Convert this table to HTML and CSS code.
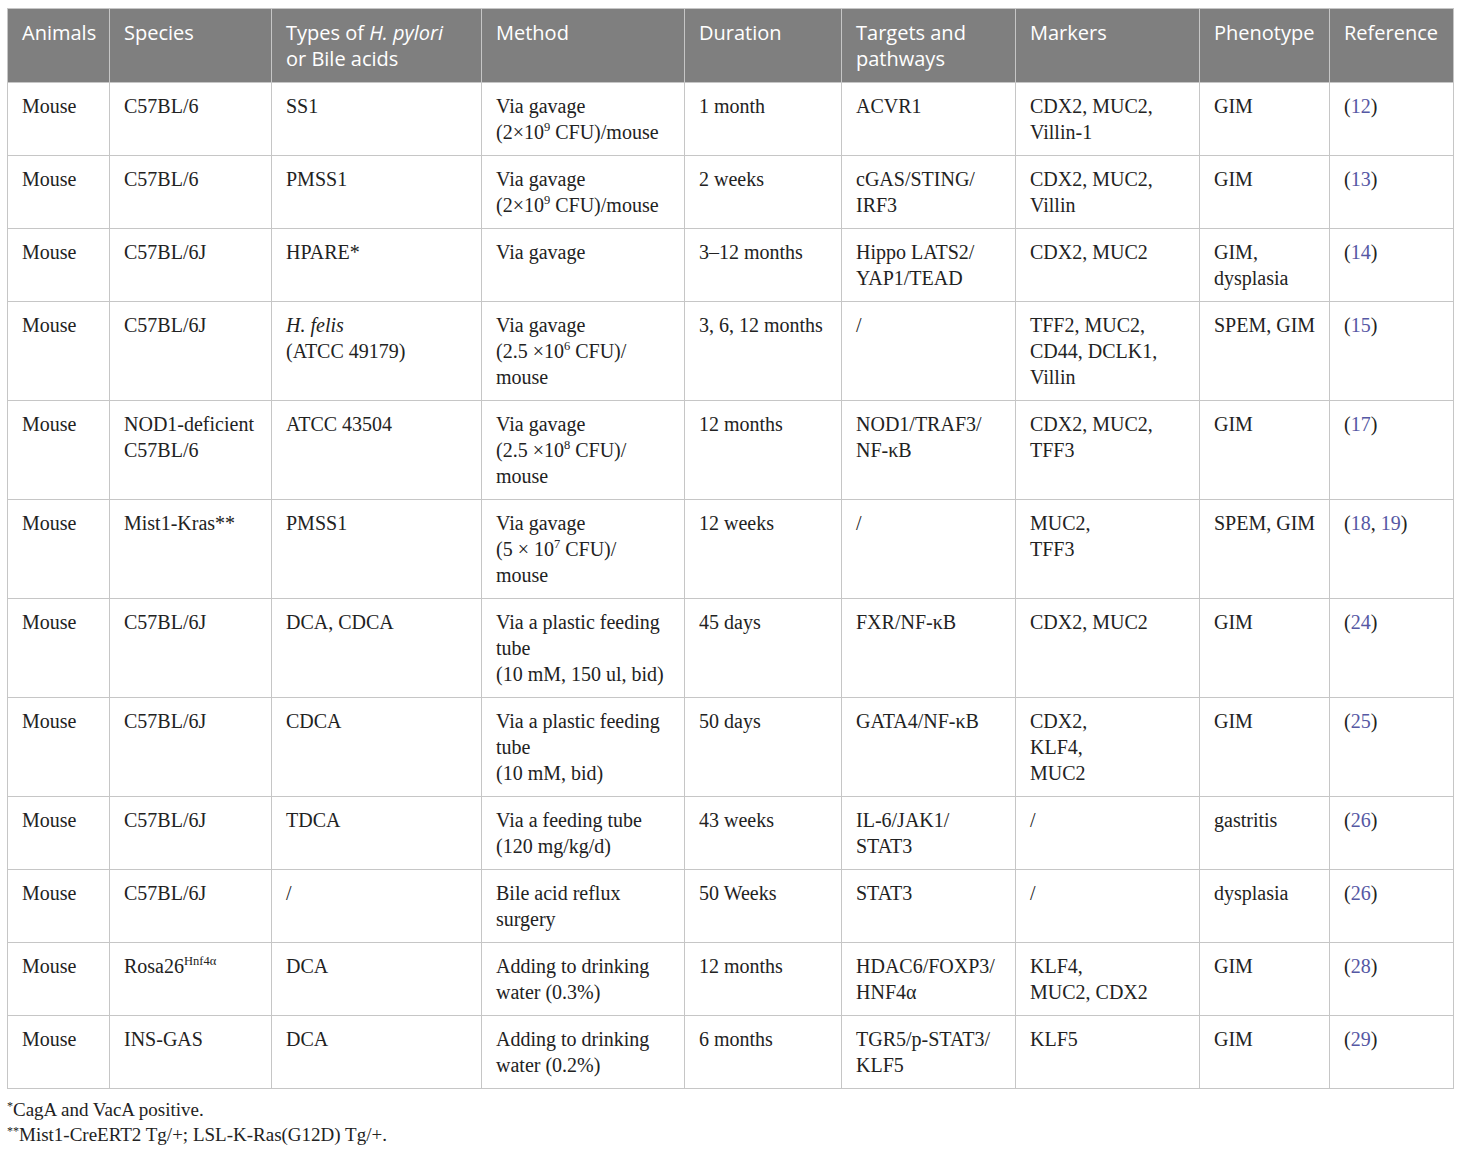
FILE: index.html
```html
<!DOCTYPE html>
<html>
<head>
<meta charset="utf-8">
<link rel="stylesheet" href="styles.css">
</head>
<body>
<div class="wrap">
<table class="data">
<colgroup>
<col class="c1"><col class="c2"><col class="c3"><col class="c4"><col class="c5"><col class="c6"><col class="c7"><col class="c8"><col class="c9">
</colgroup>
<thead>
<tr>
<th>Animals</th><th>Species</th><th>Types of <i>H. pylori</i><br>or Bile acids</th><th>Method</th><th>Duration</th><th>Targets and pathways</th><th>Markers</th><th>Phenotype</th><th>Reference</th>
</tr>
</thead>
<tbody>
<tr><td>Mouse</td><td>C57BL/6</td><td>SS1</td><td>Via gavage<br>(2×10<sup>9</sup> CFU)/mouse</td><td>1 month</td><td>ACVR1</td><td>CDX2, MUC2, Villin-1</td><td>GIM</td><td>(<a class="ref">12</a>)</td></tr>
<tr><td>Mouse</td><td>C57BL/6</td><td>PMSS1</td><td>Via gavage<br>(2×10<sup>9</sup> CFU)/mouse</td><td>2 weeks</td><td>cGAS/STING/<br>IRF3</td><td>CDX2, MUC2, Villin</td><td>GIM</td><td>(<a class="ref">13</a>)</td></tr>
<tr><td>Mouse</td><td>C57BL/6J</td><td>HPARE*</td><td>Via gavage</td><td>3–12 months</td><td>Hippo LATS2/<br>YAP1/TEAD</td><td>CDX2, MUC2</td><td>GIM,<br>dysplasia</td><td>(<a class="ref">14</a>)</td></tr>
<tr><td>Mouse</td><td>C57BL/6J</td><td><i>H. felis</i><br>(ATCC 49179)</td><td>Via gavage<br>(2.5 ×10<sup>6</sup> CFU)/<br>mouse</td><td>3, 6, 12 months</td><td>/</td><td>TFF2, MUC2,<br>CD44, DCLK1,<br>Villin</td><td class="nw">SPEM, GIM</td><td>(<a class="ref">15</a>)</td></tr>
<tr><td>Mouse</td><td>NOD1-deficient C57BL/6</td><td>ATCC 43504</td><td>Via gavage<br>(2.5 ×10<sup>8</sup> CFU)/<br>mouse</td><td>12 months</td><td>NOD1/TRAF3/<br>NF-κB</td><td>CDX2, MUC2,<br>TFF3</td><td>GIM</td><td>(<a class="ref">17</a>)</td></tr>
<tr><td>Mouse</td><td>Mist1-Kras**</td><td>PMSS1</td><td>Via gavage<br>(5 × 10<sup>7</sup> CFU)/<br>mouse</td><td>12 weeks</td><td>/</td><td>MUC2,<br>TFF3</td><td class="nw">SPEM, GIM</td><td>(<a class="ref">18</a>, <a class="ref">19</a>)</td></tr>
<tr><td>Mouse</td><td>C57BL/6J</td><td>DCA, CDCA</td><td>Via a plastic feeding<br>tube<br>(10 mM, 150 ul, bid)</td><td>45 days</td><td>FXR/NF-κB</td><td>CDX2, MUC2</td><td>GIM</td><td>(<a class="ref">24</a>)</td></tr>
<tr><td>Mouse</td><td>C57BL/6J</td><td>CDCA</td><td>Via a plastic feeding<br>tube<br>(10 mM, bid)</td><td>50 days</td><td>GATA4/NF-κB</td><td>CDX2,<br>KLF4,<br>MUC2</td><td>GIM</td><td>(<a class="ref">25</a>)</td></tr>
<tr><td>Mouse</td><td>C57BL/6J</td><td>TDCA</td><td>Via a feeding tube<br>(120 mg/kg/d)</td><td>43 weeks</td><td>IL-6/JAK1/<br>STAT3</td><td>/</td><td>gastritis</td><td>(<a class="ref">26</a>)</td></tr>
<tr><td>Mouse</td><td>C57BL/6J</td><td>/</td><td>Bile acid reflux<br>surgery</td><td>50 Weeks</td><td>STAT3</td><td>/</td><td>dysplasia</td><td>(<a class="ref">26</a>)</td></tr>
<tr><td>Mouse</td><td>Rosa26<sup class="hs">Hnf4α</sup></td><td>DCA</td><td>Adding to drinking<br>water (0.3%)</td><td>12 months</td><td>HDAC6/FOXP3/<br>HNF4α</td><td>KLF4,<br>MUC2, CDX2</td><td>GIM</td><td>(<a class="ref">28</a>)</td></tr>
<tr><td>Mouse</td><td>INS-GAS</td><td>DCA</td><td>Adding to drinking<br>water (0.2%)</td><td>6 months</td><td>TGR5/p-STAT3/<br>KLF5</td><td>KLF5</td><td>GIM</td><td>(<a class="ref">29</a>)</td></tr>
</tbody>
</table>
<div class="notes">
<p><sup>*</sup>CagA and VacA positive.</p>
<p><sup>**</sup>Mist1-CreERT2 Tg/+; LSL-K-Ras(G12D) Tg/+.</p>
</div>
</div>
</body>
</html>
```
FILE: styles.css
```css
html, body {
  margin: 0;
  padding: 0;
  background: #ffffff;
}
.wrap {
  padding: 8px 7px 0 7px;
}
.data {
  width: 1446px;
  border-collapse: collapse;
  table-layout: fixed;
  font-family: "Liberation Serif", "Times New Roman", serif;
  font-size: 20px;
  line-height: 26px;
  color: #222222;
}
.c1 { width: 102px; }
.c2 { width: 162px; }
.c3 { width: 210px; }
.c4 { width: 203px; }
.c5 { width: 157px; }
.c6 { width: 174px; }
.c7 { width: 184px; }
.c8 { width: 130px; }
.c9 { width: 124px; }
.data th {
  background: #7f7f7f;
  color: #ffffff;
  font-family: "Open Sans", "Noto Sans", sans-serif;
  font-weight: normal;
  font-size: 20px;
  line-height: 26px;
  text-align: left;
  vertical-align: top;
  padding: 11px 8px 9px 14px;
  border: 1px solid #c6c6c6;
  height: 74px;
  box-sizing: border-box;
}
.data td {
  vertical-align: top;
  text-align: left;
  padding: 10px 8px 10px 14px;
  border: 1px solid #c6c6c6;
}
.data td.nw {
  white-space: nowrap;
}
.data sup {
  font-size: 12.5px;
  line-height: 0;
  vertical-align: 8px;
}
.ref {
  color: #5558a4;
  text-decoration: none;
}
.notes {
  font-family: "Liberation Serif", "Times New Roman", serif;
  font-size: 19px;
  line-height: 25px;
  color: #222222;
  padding-top: 8px;
}
.notes p {
  margin: 0;
}
.notes sup {
  font-size: 12px;
  line-height: 0;
  vertical-align: 6px;
}
```
